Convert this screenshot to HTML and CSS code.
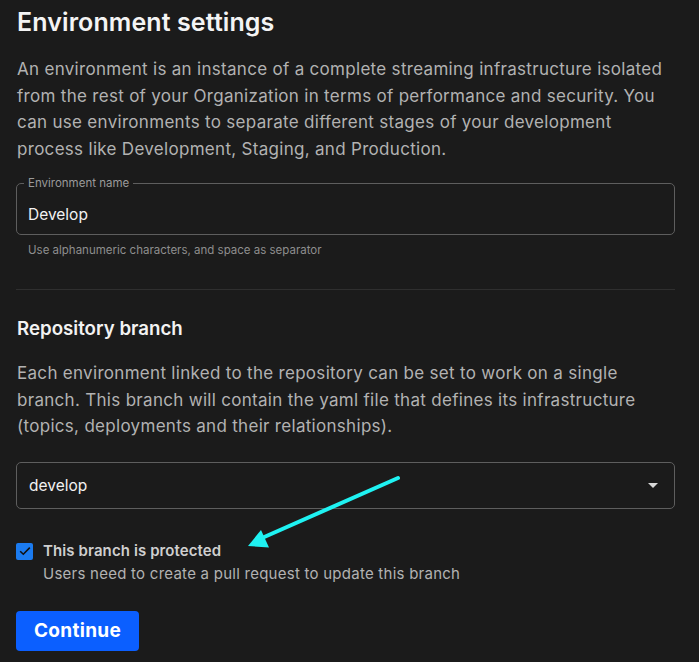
FILE: index.html
```html
<!DOCTYPE html>
<html>
<head>
<meta charset="utf-8">
<link rel="stylesheet" href="styles.css">
</head>
<body>
<main class="page">
  <h1 class="title">Environment settings</h1>
  <p class="desc">An environment is an instance of a complete streaming infrastructure isolated from the rest of your Organization in terms of performance and security. You can use environments to separate different stages of your development process like Development, Staging, and Production.</p>

  <fieldset class="field">
    <legend class="field-label">Environment name</legend>
    <div class="field-value">Develop</div>
  </fieldset>
  <div class="helper">Use alphanumeric characters, and space as separator</div>

  <hr class="divider">

  <h2 class="subtitle">Repository branch</h2>
  <p class="desc desc2">Each environment linked to the repository can be set to work on a single branch. This branch will contain the yaml file that defines its infrastructure (topics, deployments and their relationships).</p>

  <div class="select">
    <span class="select-value">develop</span>
    <span class="caret"></span>
  </div>

  <div class="check-row">
    <span class="checkbox">
      <svg width="12" height="10" viewBox="0 0 12 10"><path d="M1.2 5.2 L4.3 8.2 L10.8 1.6" fill="none" stroke="#111" stroke-width="1.6"/></svg>
    </span>
    <div class="check-text">
      <div class="check-label">This branch is protected</div>
      <div class="check-sub">Users need to create a pull request to update this branch</div>
    </div>
  </div>

  <button class="btn">Continue</button>

  <svg class="arrow" width="699" height="662" viewBox="0 0 699 662">
    <line x1="398" y1="478" x2="262" y2="538" stroke="#1ff2f2" stroke-width="4" stroke-linecap="round"/>
    <polygon points="248,546 261,530 269,547.5" fill="#1ff2f2"/>
  </svg>
</main>
</body>
</html>
```

FILE: styles.css
```css
* { box-sizing: border-box; }
html, body { margin: 0; padding: 0; background: #1b1b1b; }
body { font-family: Inter, "Noto Sans", sans-serif; color: #b4b4b4; }
.page { position: relative; width: 699px; height: 662px; padding: 0 24px 0 16px; overflow: hidden; }
.title { margin: 0; padding-top: 6px; padding-left: 1px; font-size: 25px; line-height: 32px; font-weight: 600; color: #f4f4f4; letter-spacing: 0.1px; }
.desc { margin: 18px 0 0 1px; font-size: 17px; line-height: 26.5px; color: #b2b2b2; letter-spacing: 0.3px; }
.field { margin: 15px 0 0; padding: 0 11px; height: 58px; border: 1px solid #5e5e5e; border-radius: 5px; }
.field-label { font-size: 11.5px; color: #9a9a9a; padding: 0 4px; margin-left: -4px; line-height: 12px; }
.field-value { font-size: 15.5px; color: #f2f2f2; line-height: 20px; margin-top: 16px; }
.helper { font-size: 11.5px; color: #8e8e8e; margin: 8px 0 0 12px; line-height: 14px; }
.divider { border: 0; border-top: 1px solid #2f2f2f; margin: 32px 0 0; }
.subtitle { margin: 26px 0 0 1px; font-size: 18.7px; line-height: 26px; font-weight: 600; color: #f2f2f2; }
.desc2 { margin-top: 18px; }
.select { margin-top: 22px; height: 47px; border: 1px solid #5e5e5e; border-radius: 5px; display: flex; align-items: center; justify-content: space-between; padding: 0 16px 0 12px; }
.select-value { font-size: 15.5px; color: #f2f2f2; }
.caret { width: 0; height: 0; border-left: 5px solid transparent; border-right: 5px solid transparent; border-top: 5px solid #d8d8d8; margin-top: 1px; }
.check-row { display: flex; gap: 10px; margin-top: 33px; }
.checkbox { width: 17px; height: 17px; background: #1b7bf0; border-radius: 2px; display: flex; align-items: center; justify-content: center; margin-top: 1px; flex: none; }
.check-label { font-size: 15px; font-weight: 600; color: #cfcfcf; line-height: 18px; letter-spacing: 0.1px; }
.check-sub { font-size: 15px; color: #b2b2b2; line-height: 18px; margin-top: 5px; letter-spacing: 0.25px; }
.btn { display: block; margin-top: 28px; width: 123px; height: 40px; border: 0; border-radius: 4px; background: #0b5fff; color: #fff; font-family: Inter, sans-serif; font-weight: 700; font-size: 19px; letter-spacing: 0.3px; padding: 0; }
.arrow { position: absolute; left: 0; top: 0; pointer-events: none; }
```
